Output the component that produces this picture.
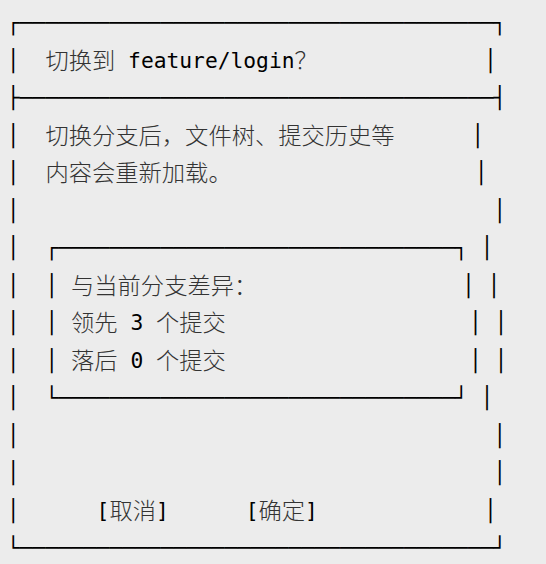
import React from "react";

const sp = (n: number) => " ".repeat(n);
const bar = (n: number) => "─".repeat(n);

// dialog drawn as box-drawing text, one string per row
const lines = [
  "┌" + bar(37) + "┐",
  "│  切换到 feature/login？" + sp(13) + "│",
  "├" + bar(37) + "┤",
  "│  切换分支后，文件树、提交历史等" + sp(6) + "│",
  "│  内容会重新加载。" + sp(19) + "│",
  "│" + sp(37) + "│",
  "│  ┌" + bar(31) + "┐ │",
  "│  │ 与当前分支差异：" + sp(16) + "│ │",
  "│  │ 领先 3 个提交" + sp(19) + "│ │",
  "│  │ 落后 0 个提交" + sp(19) + "│ │",
  "│  └" + bar(31) + "┘ │",
  "│" + sp(37) + "│",
  "│" + sp(37) + "│",
  "│      [取消]      [确定]" + sp(13) + "│",
  "└" + bar(37) + "┘",
];

const wide = /([\u3000-\u303f\u4e00-\u9fff\uff00-\uffef]+)/;

function Row({ text }: { text: string }) {
  const parts = text.split(wide).filter((p) => p.length > 0);
  return (
    <div className="h-[37.54px] whitespace-pre leading-[37.54px]">
      {parts.map((p, i) =>
        wide.test(p) ? (
          <span
            key={i}
            className="align-[-1px] font-['Noto_Sans_CJK_SC',sans-serif] text-[23.29px] font-light leading-none text-[#333]"
          >
            {p}
          </span>
        ) : (
          <span key={i}>{p}</span>
        )
      )}
    </div>
  );
}

export default function App() {
  return (
    <div className="min-h-screen w-full bg-[#ececec] pl-[7px] pt-[4px] font-['DejaVu_Sans_Mono',monospace] text-[21.28px] text-black">
      {lines.map((l, i) => (
        <Row key={i} text={l} />
      ))}
    </div>
  );
}
